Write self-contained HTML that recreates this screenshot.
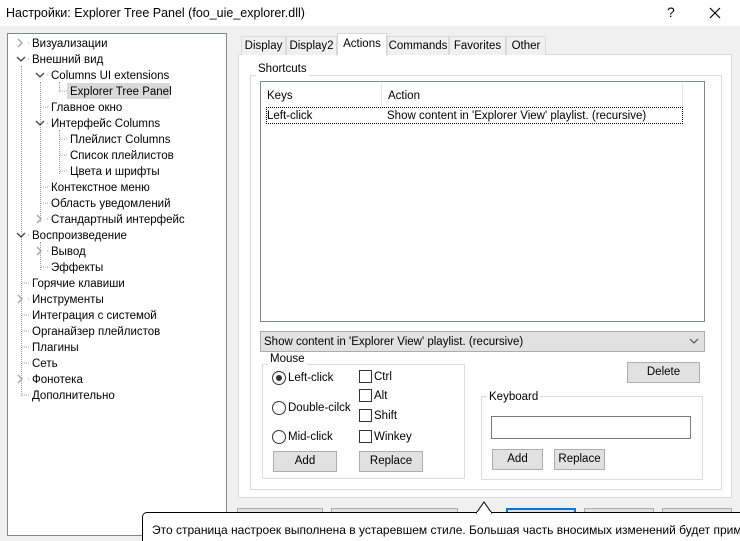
<!DOCTYPE html>
<html style="width:740px;height:541px;overflow:hidden"><head><meta charset="utf-8"><style>
*{margin:0;padding:0;box-sizing:border-box}
html,body{overflow:hidden}
body{width:740px;height:541px;background:#f0f0f0;position:relative;overflow:hidden;font-family:"Liberation Sans","Noto Sans CJK SC",sans-serif;font-size:11.5px;color:#000}
.a{position:absolute;white-space:nowrap}
.btn{position:absolute;background:#e1e1e1;border:1px solid #adadad;text-align:center;line-height:18px}
.t{position:absolute;white-space:nowrap;line-height:16px}
.dv{position:absolute;border-left:1px dotted #a0a0a0;width:0}
.tab{position:absolute;top:36px;height:19px;border:1px solid #d9d9d9;border-bottom:none;background:#f0f0f0;text-align:center;line-height:18px}
.grp{position:absolute;border:1px solid #dcdcdc}
.lbl{position:absolute;background:#fff;padding:0 2px;line-height:13px}
.rad{position:absolute;width:14px;height:14px;border:1px solid #333;border-radius:50%;background:#fff}
.chk{position:absolute;width:13px;height:13px;border:1px solid #333;background:#fff}
#tr .t{margin-top:1px}
</style></head><body>
<div class="a" style="left:0;top:0;width:740px;height:26px;background:#fff"></div>
<div class="a" style="left:6px;top:6px;font-size:12.5px">Настройки: Explorer Tree Panel (foo_uie_explorer.dll)</div>
<div class="a" style="left:667px;top:4px;font-size:14px">?</div>
<svg class="a" style="left:709px;top:7px" width="12" height="12"><path d="M1 1L11 11M11 1L1 11" stroke="#000" stroke-width="1.2"/></svg>

<div class="a" style="left:7px;top:33px;width:220px;height:503px;background:#fff;border:1px solid #828790"></div>
<div class="dv" style="left:21px;top:66px;height:330px"></div>
<div class="dv" style="left:40px;top:82px;height:140px"></div>
<div class="dv" style="left:59px;top:130px;height:44px"></div>
<div class="dv" style="left:40px;top:242px;height:28px"></div>
<div class="dv" style="left:59px;top:82px;height:10px"></div>
<svg class="a" style="left:0;top:0" width="230" height="420">
<g fill="none" stroke-width="1.3">
<path d="M18 39l4 4-4 4" stroke="#a0a0a0"/>
<path d="M17 57l4 4 4-4" stroke="#444"/>
<path d="M36 73l4 4 4-4" stroke="#444"/>
<path d="M36 121l4 4 4-4" stroke="#444"/>
<path d="M37 215l4 4-4 4" stroke="#a0a0a0"/>
<path d="M17 233l4 4 4-4" stroke="#444"/>
<path d="M37 247l4 4-4 4" stroke="#a0a0a0"/>
<path d="M18 295l4 4-4 4" stroke="#a0a0a0"/>
<path d="M18 375l4 4-4 4" stroke="#a0a0a0"/>
</g>
<g stroke="#a0a0a0" stroke-dasharray="1 1">
<path d="M60 91h8M41 107h8M60 139h8M60 155h8M60 171h8M41 187h8M41 203h8M41 267h8M22 283h8M22 315h8M22 331h8M22 347h8M22 363h8M22 395h8M28 43h2M28 59h2M47 75h2M47 123h2M47 219h2M28 235h2M47 251h2M28 299h2M28 379h2"/>
</g></svg>
<div class="a" style="left:67px;top:83px;width:103px;height:16px;background:#d9d9d9"></div>
<div id="tr">
<div class="t" style="left:32px;top:35px">Визуализации</div>
<div class="t" style="left:32px;top:51px">Внешний вид</div>
<div class="t" style="left:51px;top:67px">Columns UI extensions</div>
<div class="t" style="left:70px;top:83px">Explorer Tree Panel</div>
<div class="t" style="left:51px;top:99px">Главное окно</div>
<div class="t" style="left:51px;top:115px">Интерфейс Columns</div>
<div class="t" style="left:70px;top:131px">Плейлист Columns</div>
<div class="t" style="left:70px;top:147px">Список плейлистов</div>
<div class="t" style="left:70px;top:163px">Цвета и шрифты</div>
<div class="t" style="left:51px;top:179px">Контекстное меню</div>
<div class="t" style="left:51px;top:195px">Область уведомлений</div>
<div class="t" style="left:51px;top:211px">Стандартный интерфейс</div>
<div class="t" style="left:32px;top:227px">Воспроизведение</div>
<div class="t" style="left:51px;top:243px">Вывод</div>
<div class="t" style="left:51px;top:259px">Эффекты</div>
<div class="t" style="left:32px;top:275px">Горячие клавиши</div>
<div class="t" style="left:32px;top:291px">Инструменты</div>
<div class="t" style="left:32px;top:307px">Интеграция с системой</div>
<div class="t" style="left:32px;top:323px">Органайзер плейлистов</div>
<div class="t" style="left:32px;top:339px">Плагины</div>
<div class="t" style="left:32px;top:355px">Сеть</div>
<div class="t" style="left:32px;top:371px">Фонотека</div>
<div class="t" style="left:32px;top:387px">Дополнительно</div>
</div>

<div class="a" style="left:238px;top:54px;width:494px;height:444px;background:#fff;border:1px solid #d9d9d9"></div>
<div class="tab" style="left:241px;width:45px">Display</div>
<div class="tab" style="left:286px;width:51px">Display2</div>
<div class="tab" style="left:506px;width:40px">Other</div>
<div class="tab" style="left:449px;width:57px">Favorites</div>
<div class="tab" style="left:387px;width:62px">Commands</div>
<div class="tab" style="left:337px;top:33px;height:23px;width:50px;background:#fff;line-height:20px">Actions</div>

<div class="grp" style="left:250px;top:75px;width:472px;height:415px"></div>
<div class="lbl" style="left:256px;top:63px">Shortcuts</div>
<div class="a" style="left:260px;top:81px;width:445px;height:241px;border:1px solid #828790;background:#fff"></div>
<div class="a" style="left:381px;top:84px;height:22px;border-left:1px solid #e5e5e5"></div>
<div class="a" style="left:682px;top:84px;height:22px;border-left:1px solid #e5e5e5"></div>
<div class="t" style="left:267px;top:88px">Keys</div>
<div class="t" style="left:388px;top:88px">Action</div>
<div class="a" style="left:266px;top:107px;width:417px;height:17px;border:1px dotted #000"></div>
<div class="t" style="left:267px;top:108px">Left-click</div>
<div class="t" style="left:387px;top:108px">Show content in 'Explorer View' playlist. (recursive)</div>

<div class="a" style="left:260px;top:331px;width:445px;height:21px;background:#e1e1e1;border:1px solid #adadad;padding-left:3px;line-height:20px">Show content in 'Explorer View' playlist. (recursive)</div>
<svg class="a" style="left:689px;top:338px" width="10" height="6"><path d="M1 1l4 4 4-4" stroke="#444" fill="none"/></svg>

<div class="grp" style="left:262px;top:364px;width:203px;height:115px"></div>
<div class="lbl" style="left:268px;top:353px">Mouse</div>
<div class="rad" style="left:272px;top:371px"></div><div class="a" style="left:276px;top:375px;width:6px;height:6px;border-radius:50%;background:#333"></div>
<div class="t" style="left:288px;top:370px">Left-click</div>
<div class="rad" style="left:272px;top:401px"></div><div class="t" style="left:288px;top:400px">Double-cilck</div>
<div class="rad" style="left:272px;top:430px"></div><div class="t" style="left:288px;top:429px">Mid-click</div>
<div class="chk" style="left:359px;top:370px"></div><div class="t" style="left:374px;top:369px">Ctrl</div>
<div class="chk" style="left:359px;top:389px"></div><div class="t" style="left:374px;top:388px">Alt</div>
<div class="chk" style="left:359px;top:409px"></div><div class="t" style="left:374px;top:408px">Shift</div>
<div class="chk" style="left:359px;top:430px"></div><div class="t" style="left:374px;top:429px">Winkey</div>
<div class="btn" style="left:273px;top:451px;width:64px;height:21px">Add</div>
<div class="btn" style="left:359px;top:451px;width:64px;height:21px">Replace</div>

<div class="btn" style="left:627px;top:362px;width:73px;height:21px">Delete</div>
<div class="grp" style="left:481px;top:396px;width:222px;height:84px"></div>
<div class="lbl" style="left:487px;top:391px">Keyboard</div>
<div class="a" style="left:491px;top:416px;width:200px;height:23px;border:1px solid #7a7a7a;background:#fff"></div>
<div class="btn" style="left:492px;top:449px;width:51px;height:21px">Add</div>
<div class="btn" style="left:554px;top:449px;width:51px;height:21px">Replace</div>

<div class="btn" style="left:237px;top:508px;width:86px;height:30px"></div>
<div class="btn" style="left:331px;top:508px;width:127px;height:30px"></div>
<div class="btn" style="left:506px;top:508px;width:70px;height:30px;border:2px solid #0078d7"></div>
<div class="btn" style="left:584px;top:508px;width:70px;height:30px"></div>
<div class="btn" style="left:662px;top:508px;width:70px;height:30px"></div>

<div class="a" style="left:142px;top:512px;width:610px;height:29px;background:#fff;border:1px solid #000;border-bottom:none;border-radius:5px 5px 0 0"></div>
<svg class="a" style="left:476px;top:501px" width="16" height="13"><path d="M0 12.5L8 1L16 12.5" fill="#fff" stroke="#000"/><rect x="1" y="11" width="14" height="3" fill="#fff"/></svg>
<div class="a" style="left:152px;top:523px;font-size:12px">Это страница настроек выполнена в устаревшем стиле. Большая часть вносимых изменений будет применена</div>
</body></html>
